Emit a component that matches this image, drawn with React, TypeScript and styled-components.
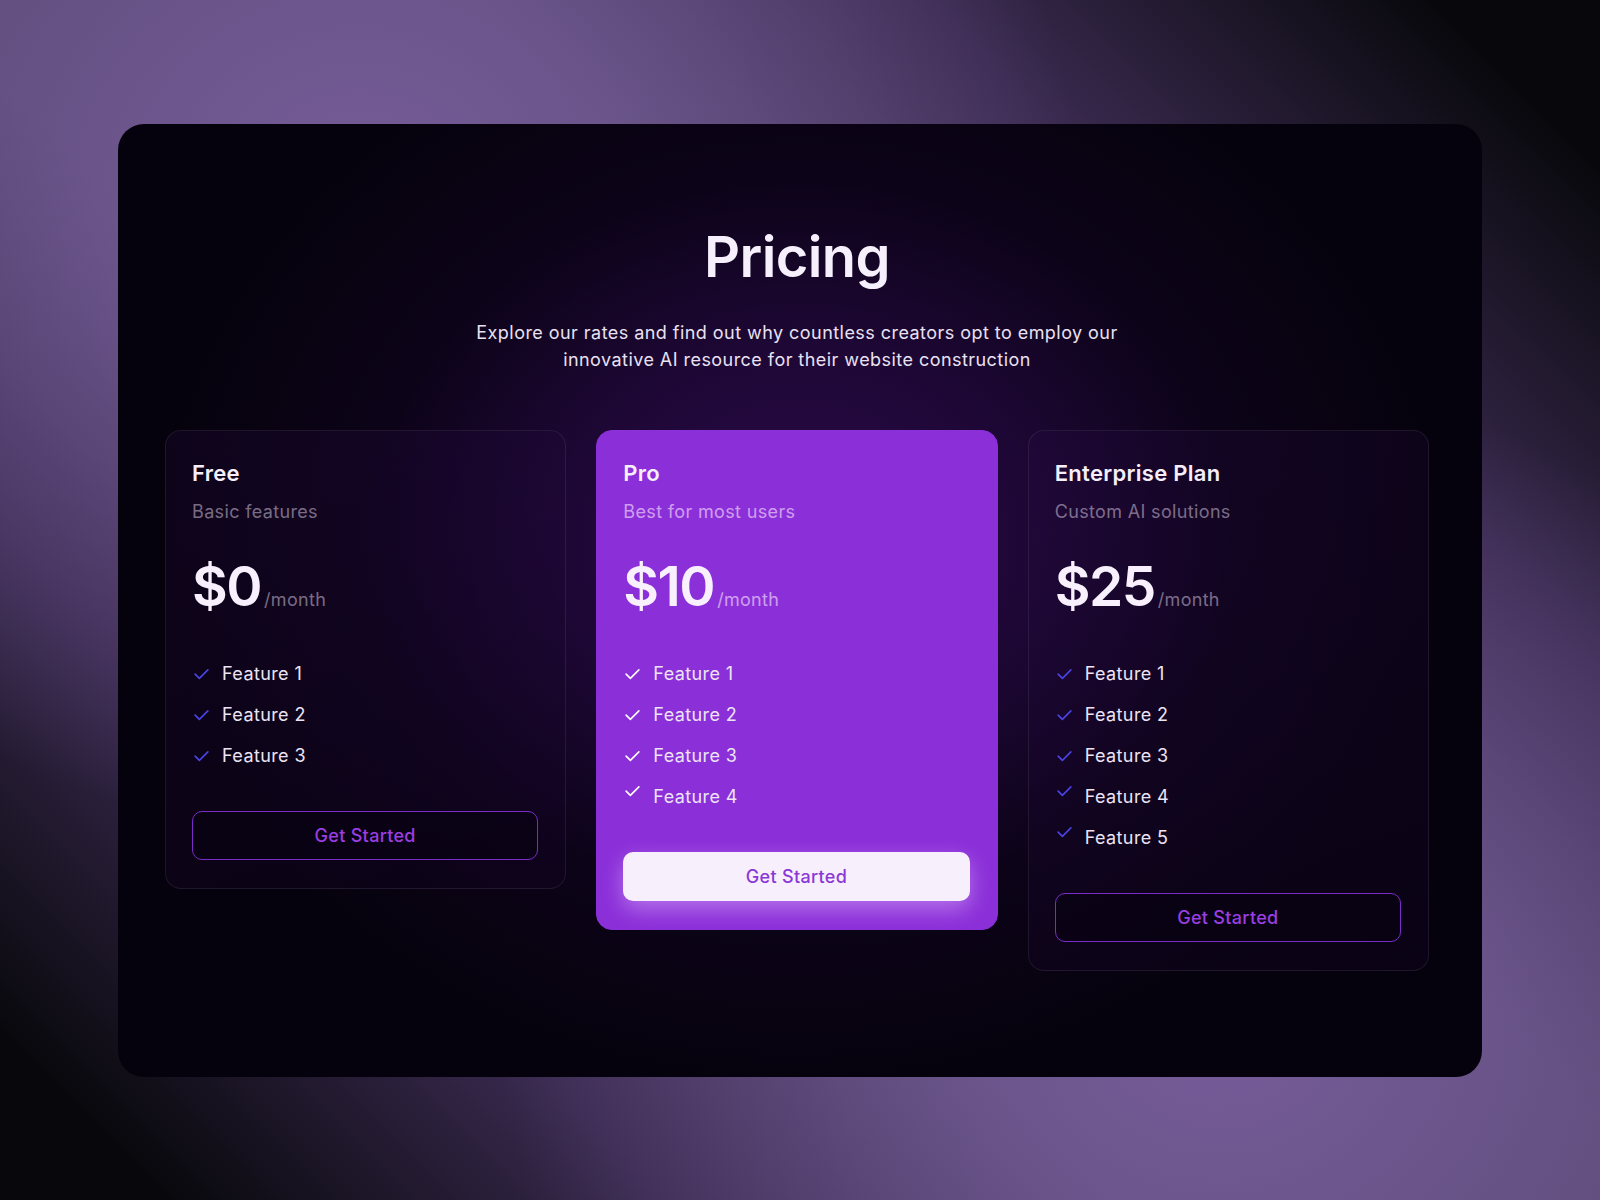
import React from 'react';
import styled, { createGlobalStyle } from 'styled-components';

const GlobalStyle = createGlobalStyle`
  * { box-sizing: border-box; }
  html, body { margin: 0; padding: 0; }
  body {
    font-family: Inter, "Noto Sans", "DejaVu Sans", sans-serif;
    background: #0a0810;
  }
`;

type Plan = {
  name: string;
  note: string;
  price: string;
  features: string[];
  featured?: boolean;
};

const plans: Plan[] = [
  { name: 'Free', note: 'Basic features', price: '$0', features: ['Feature 1', 'Feature 2', 'Feature 3'] },
  {
    name: 'Pro',
    note: 'Best for most users',
    price: '$10',
    features: ['Feature 1', 'Feature 2', 'Feature 3', 'Feature 4'],
    featured: true,
  },
  {
    name: 'Enterprise Plan',
    note: 'Custom AI solutions',
    price: '$25',
    features: ['Feature 1', 'Feature 2', 'Feature 3', 'Feature 4', 'Feature 5'],
  },
];

const CheckIcon = () => (
  <svg width="17" height="17" viewBox="0 0 24 24" fill="none" stroke="currentColor" strokeWidth="2.3" strokeLinecap="round" strokeLinejoin="round">
    <path d="M21 5.5 9 17.5l-6-6" />
  </svg>
);

export default function App() {
  return (
    <>
      <GlobalStyle />
      <Page>
        <Panel>
          <Title>Pricing</Title>
          <Lead>
            Explore our rates and find out why countless creators opt to employ our
            <br />
            innovative AI resource for their website construction
          </Lead>
          <Cards>
            {plans.map((plan) => (
              <Card key={plan.name} $featured={plan.featured}>
                <PlanName>{plan.name}</PlanName>
                <PlanNote $featured={plan.featured}>{plan.note}</PlanNote>
                <PriceRow>
                  <Price>{plan.price}</Price>
                  <Per $featured={plan.featured}>/month</Per>
                </PriceRow>
                <Features>
                  {plan.features.map((f, i) => (
                    <Feature key={f}>
                      <Tick $featured={plan.featured} $lift={i > 2}>
                        <CheckIcon />
                      </Tick>
                      {f}
                    </Feature>
                  ))}
                </Features>
                <Cta $featured={plan.featured}>Get Started</Cta>
              </Card>
            ))}
          </Cards>
        </Panel>
      </Page>
    </>
  );
}

const Page = styled.div`
  width: 1600px;
  height: 1200px;
  padding: 124px 118px 123px;
  background:
    radial-gradient(ellipse 720px 640px at 360px 200px, rgba(124, 96, 162, 0.85), rgba(124, 96, 162, 0) 100%),
    radial-gradient(ellipse 720px 640px at 1220px 1020px, rgba(124, 96, 162, 0.85), rgba(124, 96, 162, 0) 100%),
    linear-gradient(45deg, #08080c 6%, #3a2a50 24%, #56476e 40%, #56476e 60%, #3a2a50 76%, #08080c 94%);
`;

const Panel = styled.div`
  height: 953px;
  border-radius: 26px;
  padding: 100px 53px 0 47px;
  display: flex;
  flex-direction: column;
  align-items: center;
  background:
    radial-gradient(ellipse 640px 540px at 50% 44%, #2c0b4c 0%, #1d0734 38%, #0c0318 68%, #06020d 100%);
`;

const Title = styled.h1`
  margin: 0;
  font-size: 56px;
  line-height: 67px;
  font-weight: 600;
  color: #f6effc;
  letter-spacing: -0.6px;
`;

const Lead = styled.p`
  margin: 28px 0 0;
  text-align: center;
  font-size: 18px;
  line-height: 27px;
  letter-spacing: 0.45px;
  color: #e9e1f2;
`;

const Cards = styled.div`
  margin-top: 57px;
  width: 100%;
  display: grid;
  grid-template-columns: repeat(3, 1fr);
  gap: 30px;
  align-items: start;
`;

const Card = styled.div<{ $featured?: boolean }>`
  display: flex;
  flex-direction: column;
  padding: 27px 27px 28px 26px;
  border-radius: 16px;
  border: 1px solid ${(p) => (p.$featured ? '#8b2fd9' : 'rgba(255, 255, 255, 0.08)')};
  background: ${(p) =>
    p.$featured ? '#8b2fd9' : 'linear-gradient(160deg, rgba(40, 12, 70, 0.25), rgba(20, 4, 36, 0.35))'};
  color: #f5eefb;
`;

const PlanName = styled.div`
  font-size: 22px;
  line-height: 30px;
  font-weight: 600;
  letter-spacing: 0.3px;
`;

const PlanNote = styled.div<{ $featured?: boolean }>`
  margin-top: 12px;
  font-size: 18px;
  line-height: 24px;
  letter-spacing: 0.35px;
  color: ${(p) => (p.$featured ? 'rgba(255, 236, 255, 0.6)' : 'rgba(225, 215, 235, 0.5)')};
`;

const PriceRow = styled.div`
  margin-top: 30px;
  display: flex;
  align-items: baseline;
  gap: 3px;
`;

const Price = styled.span`
  font-size: 55px;
  line-height: 64px;
  font-weight: 600;
  letter-spacing: -1.5px;
  color: #f8f0fd;
`;

const Per = styled.span<{ $featured?: boolean }>`
  font-size: 18px;
  letter-spacing: 0.3px;
  color: ${(p) => (p.$featured ? 'rgba(255, 236, 255, 0.6)' : 'rgba(225, 215, 235, 0.5)')};
`;

const Features = styled.ul`
  list-style: none;
  margin: 44px 0 0;
  padding: 0;
  display: flex;
  flex-direction: column;
  gap: 17px;
`;

const Feature = styled.li`
  display: flex;
  align-items: center;
  gap: 12px;
  font-size: 18px;
  line-height: 24px;
  letter-spacing: 0.4px;
  color: #ece4f4;
`;

const Tick = styled.span<{ $featured?: boolean; $lift?: boolean }>`
  display: flex;
  margin-left: 1px;
  align-self: ${(p) => (p.$lift ? 'flex-start' : 'center')};
  margin-top: ${(p) => (p.$lift ? '-2px' : '0')};
  color: ${(p) => (p.$featured ? '#ffffff' : '#4a44e6')};
`;

const Cta = styled.button<{ $featured?: boolean }>`
  margin-top: 43px;
  height: 49px;
  width: 100%;
  border-radius: 10px;
  font-family: inherit;
  font-size: 18px;
  font-weight: 500;
  letter-spacing: 0.3px;
  cursor: pointer;
  border: ${(p) => (p.$featured ? 'none' : '1.5px solid #7a2bc8')};
  background: ${(p) => (p.$featured ? '#f8effd' : 'rgba(8, 2, 16, 0.55)')};
  color: ${(p) => (p.$featured ? '#8a38d6' : '#9a3ee2')};
  box-shadow: ${(p) => (p.$featured ? '0 8px 22px rgba(236, 200, 255, 0.45)' : 'none')};
`;
